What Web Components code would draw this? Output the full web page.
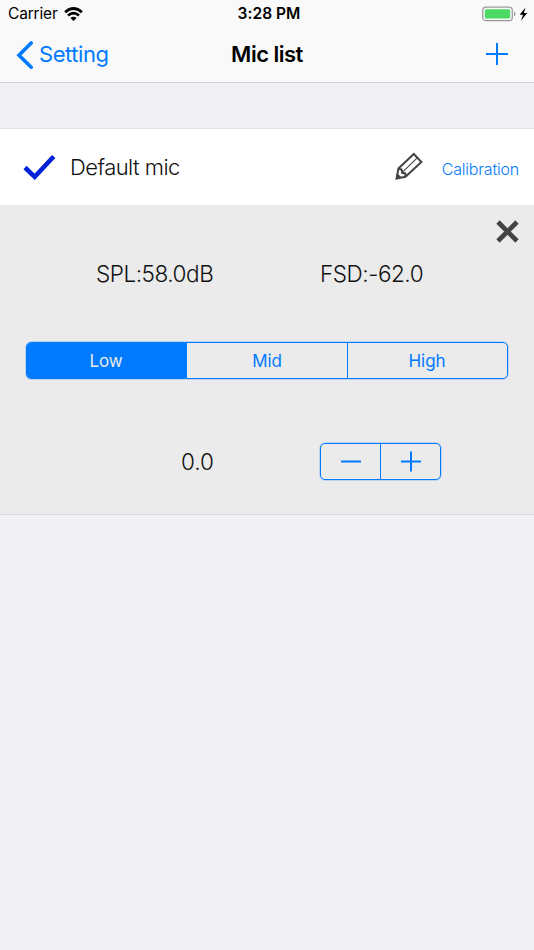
<!DOCTYPE html>
<html lang="en"><head><meta charset="utf-8"><title>Mic list</title>
<style>
html,body{margin:0;height:100%;background:#efeff4}
body{font-family:Inter,"Liberation Sans",sans-serif;color:#111;overflow:hidden}
</style></head><body>
<mic-app></mic-app>
<script>
const define=(name,html)=>customElements.define(name,class extends HTMLElement{
  constructor(){super();const t=document.createElement('template');t.innerHTML=html;
    this.attachShadow({mode:'open'}).append(t.content.cloneNode(true));}
});

define('status-bar',`<style>
:host{display:grid;grid-template-columns:1fr auto 1fr;height:28px;align-items:center;color:#000;box-sizing:border-box;font-size:15.5px;line-height:28px}
.l,.r{display:flex;align-items:center}.l{padding-left:8px;gap:7px;letter-spacing:-.17px}.r{justify-content:flex-end;padding-right:5px}
b{font-weight:600;font-size:15.5px;letter-spacing:.05px;margin-left:4px}svg{display:block}
.l svg{margin:-1px 0 0 -1px}.r svg{margin-top:-1px}
</style>
<div class="l"><span>Carrier</span><svg width="19" height="14" viewBox="0 0 19 14"><g fill="none" stroke="#000" stroke-width="2.7"><path d="M1.1 5.2Q9.5-2.2 17.9 5.2"/><path d="M4 8.5Q9.5 3.8 15 8.5"/></g><path d="M6.4 11Q9.5 8.3 12.6 11L9.5 14Z"/></svg></div>
<b>3:28 PM</b>
<div class="r"><svg width="47" height="16" viewBox="0 0 47 16"><rect x=".7" y="1.2" width="29.6" height="13.4" rx="3.2" fill="none" stroke="#9b9b9b" stroke-width="1.3"/><rect x="2.8" y="3.3" width="25.4" height="9.3" rx="1.4" fill="#4cd964"/><path d="M32 5.6Q33.6 6.2 33.6 8T32 10.3Z" fill="#9b9b9b"/><path d="M43.6 1.5L37.6 8.8H41L39 14.7L45.2 7.1H41.8Z"/></svg></div>`);

define('nav-bar',`<style>
:host{display:grid;grid-template-columns:1fr auto 1fr;height:54px;align-items:center;font-size:22px;line-height:52px;border-bottom:1px solid #d3d3d6}
.l{display:flex;align-items:center;color:#007aff;padding:0 0 2px 16px;gap:5px;letter-spacing:-.45px}.r{display:flex;justify-content:flex-end;padding:0 25px 2px 0}
b{font-weight:600;color:#000;letter-spacing:-.5px;padding-bottom:2px}svg{display:block}
.l svg{margin-top:1px}
</style>
<div class="l"><svg width="18" height="28" viewBox="0 0 18 28"><path d="M15.2 2L3 14.2L15.2 26.2" fill="none" stroke="#007aff" stroke-width="3.6" stroke-linecap="round"/></svg><slot name="back"></slot></div>
<b><slot></slot></b>
<div class="r"><svg width="24" height="24" viewBox="0 0 24 24"><path d="M12 1V23M1 12H23" stroke="#007aff" stroke-width="2"/></svg></div>`);

define('mic-row',`<style>
:host{display:flex;align-items:center;background:#fff;border-top:1px solid #e3e3e7;padding:0 15px 0 23px;height:76px}
.name{font-size:22px;font-weight:300;margin-left:14px;flex:1;letter-spacing:-.55px}
.cal{font-size:16px;font-weight:300;color:#007aff;margin-left:18px;padding-top:4px;letter-spacing:-.2px}svg{display:block}
</style>
<svg width="33" height="26" viewBox="0 0 33 26"><path d="M2 13.5L11.7 22.8L30.7 2.5" fill="none" stroke="#0022d9" stroke-width="4.6"/></svg>
<span class="name"><slot></slot></span>
<svg width="30" height="30" viewBox="0 0 30 30" fill="none" stroke="#444" stroke-width="2"><path d="M4.4 16.6L19.8 2L27.4 10L11.5 24.8L2.6 26.6ZM4.4 16.6L7.6 17.6L8.2 20.8L11.3 21.4L11.5 24.8"/><path d="M8.5 20.2L23 6.2" stroke-width="1.1"/><path d="M3.2 21.2L8 25.8L1.6 27.4Z" fill="#444" stroke="none"/></svg>
<span class="cal"><slot name="action"></slot></span>`);

define('segment-control',`<style>
:host{display:grid;grid-template-columns:160px 161px 1fr;height:37px;box-sizing:border-box;border:1px solid #007aff;border-radius:5px;overflow:hidden;color:#007aff;font-size:17px;line-height:36px;text-align:center;box-shadow:0 0 0 .5px #007aff66;letter-spacing:-.1px}
span+span{border-left:1px solid #007aff}.on{background:#007aff;color:#ebebeb}
span{margin-left:-1px;padding-right:1px}.on{margin-left:0;padding:0 1px 0 0;margin-right:1px}
</style><span class="on">Low</span><span>Mid</span><span>High</span>`);

define('step-control',`<style>
:host{display:grid;grid-template-columns:59px 1fr;width:121px;height:37px;box-sizing:border-box;border:1px solid #007aff;border-radius:5px;box-shadow:0 0 0 .5px #007aff66}
div{display:grid;place-items:center}div+div{border-left:1px solid #007aff}svg{display:block}
</style><div><svg width="20" height="21"><path d="M0 10.5H20" stroke="#007aff" stroke-width="2"/></svg></div><div><svg width="20" height="21"><path d="M0 10.5H20M10 .5V20.5" stroke="#007aff" stroke-width="2"/></svg></div>`);

define('calibration-panel',`<style>
:host{display:flex;flex-direction:column;height:309px;background:#ebebeb;border-bottom:1px solid #dadade;font-size:22.5px;font-weight:300}
.close{display:flex;justify-content:flex-end;padding:15px 15px 0 0;height:24px}
.vals{display:grid;grid-template-columns:224px 1fr;padding-left:96px;height:38px;line-height:38px;margin-top:11px;letter-spacing:-.45px}
segment-control{margin:49px 26px 0;font-weight:400}
.step{display:flex;justify-content:flex-end;align-items:center;gap:106px;padding-right:93px;margin-top:64px}
svg{display:block}
</style>
<div class="close"><svg width="23" height="23" viewBox="0 0 23 23"><path d="M2 2L21 21M21 2L2 21" stroke="#444" stroke-width="4.7"/></svg></div>
<div class="vals"><slot name="spl"></slot><slot name="fsd"></slot></div>
<segment-control></segment-control>
<div class="step"><slot name="offset"></slot><step-control></step-control></div>`);

define('mic-app',`<style>
:host{display:flex;flex-direction:column;width:534px;height:950px;background:#efeff4}
header{background:#f9f9f9}mic-row{margin-top:45px}
</style>
<header><status-bar></status-bar><nav-bar><span slot="back">Setting</span>Mic list</nav-bar></header>
<main><mic-row>Default mic<span slot="action">Calibration</span></mic-row>
<calibration-panel><span slot="spl">SPL:58.0dB</span><span slot="fsd">FSD:-62.0</span><span slot="offset">0.0</span></calibration-panel></main>`);
</script></body></html>
